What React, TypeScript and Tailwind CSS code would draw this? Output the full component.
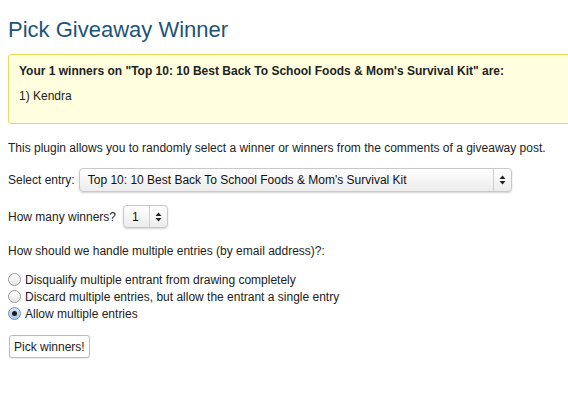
import React from "react";

function Arrows() {
  return (
    <svg width="7" height="10" viewBox="0 0 7 10" className="block">
      <path d="M3.5 0.5 L6.5 4 L0.5 4 Z" fill="#222" />
      <path d="M3.5 9.5 L6.5 6 L0.5 6 Z" fill="#222" />
    </svg>
  );
}

function Radio({ checked }: { checked?: boolean }) {
  return (
    <span
      className={
        "flex h-[13px] w-[13px] shrink-0 items-center justify-center rounded-full border " +
        (checked
          ? "border-[#6f8fb5] bg-gradient-to-b from-[#d5e6f7] to-[#a9c8ea]"
          : "border-[#9a9a9a] bg-gradient-to-b from-[#ffffff] to-[#e6e6e6]")
      }
    >
      {checked && <span className="h-[5px] w-[5px] rounded-full bg-[#1b1b1b]" />}
    </span>
  );
}

export default function App() {
  return (
    <div
      className="h-[407px] w-[568px] overflow-hidden bg-white text-[12px] text-[#333]"
      style={{ fontFamily: '"Liberation Sans", Arial, sans-serif' }}
    >
      <div className="pl-2 pt-[17px]">
        <h2 className="text-[22px] leading-[26px] text-[#1e5478]">Pick Giveaway Winner</h2>
        <div className="mt-[11px] -mr-[20px] rounded-[3px] border border-[#e6db55] bg-[#ffffe0] px-[10px] pb-[19px] pt-[9px]">
          <p className="text-[12px] font-bold leading-[15px] text-[#222]">
            Your 1 winners on "Top 10: 10 Best Back To School Foods &amp; Mom's Survival Kit" are:
          </p>
          <p className="mt-[10px] text-[12px] leading-[15px] text-[#222]">1) Kendra</p>
        </div>

        <p className="mt-[16px] leading-[16px] text-[#222]">
          This plugin allows you to randomly select a winner or winners from the comments of a giveaway post.
        </p>

        <div className="mt-[12px] flex items-center">
          <span className="text-[#222]">Select entry:</span>
          <div className="ml-[4px] flex h-[24px] w-[433px] items-stretch rounded-[4px] border border-[#c8c8c8] bg-gradient-to-b from-[#ffffff] to-[#ececec] shadow-[0_1px_2px_rgba(0,0,0,0.18)]">
            <span className="flex flex-1 items-center pl-[8px] text-[#111]">
              Top 10: 10 Best Back To School Foods &amp; Mom's Survival Kit
            </span>
            <span className="flex w-[18px] items-center justify-center border-l border-[#cfcfcf]">
              <Arrows />
            </span>
          </div>
        </div>

        <div className="mt-[13px] flex items-center">
          <span className="text-[#222]">How many winners?</span>
          <div className="ml-[7px] flex h-[23px] w-[45px] items-stretch rounded-[4px] border border-[#c8c8c8] bg-gradient-to-b from-[#ffffff] to-[#ececec] shadow-[0_1px_2px_rgba(0,0,0,0.18)]">
            <span className="flex flex-1 items-center pl-[8px] text-[#111]">1</span>
            <span className="flex w-[18px] items-center justify-center border-l border-[#cfcfcf]">
              <Arrows />
            </span>
          </div>
        </div>

        <p className="mt-[15px] leading-[16px] text-[#222]">
          How should we handle multiple entries (by email address)?:
        </p>

        <div className="mt-[12px] flex flex-col">
          <label className="flex h-[17px] items-center gap-[4px] text-[#222]">
            <Radio />
            <span>Disqualify multiple entrant from drawing completely</span>
          </label>
          <label className="flex h-[17px] items-center gap-[4px] text-[#222]">
            <Radio />
            <span>Discard multiple entries, but allow the entrant a single entry</span>
          </label>
          <label className="flex h-[17px] items-center gap-[4px] text-[#222]">
            <Radio checked />
            <span>Allow multiple entries</span>
          </label>
        </div>

        <button className="ml-[1px] mt-[13px] h-[23px] rounded-[3px] border border-[#bbb] bg-white px-[4px] text-[12px] text-[#222] shadow-[0_1px_1px_rgba(0,0,0,0.08)]">
          Pick winners!
        </button>
      </div>
    </div>
  );
}
